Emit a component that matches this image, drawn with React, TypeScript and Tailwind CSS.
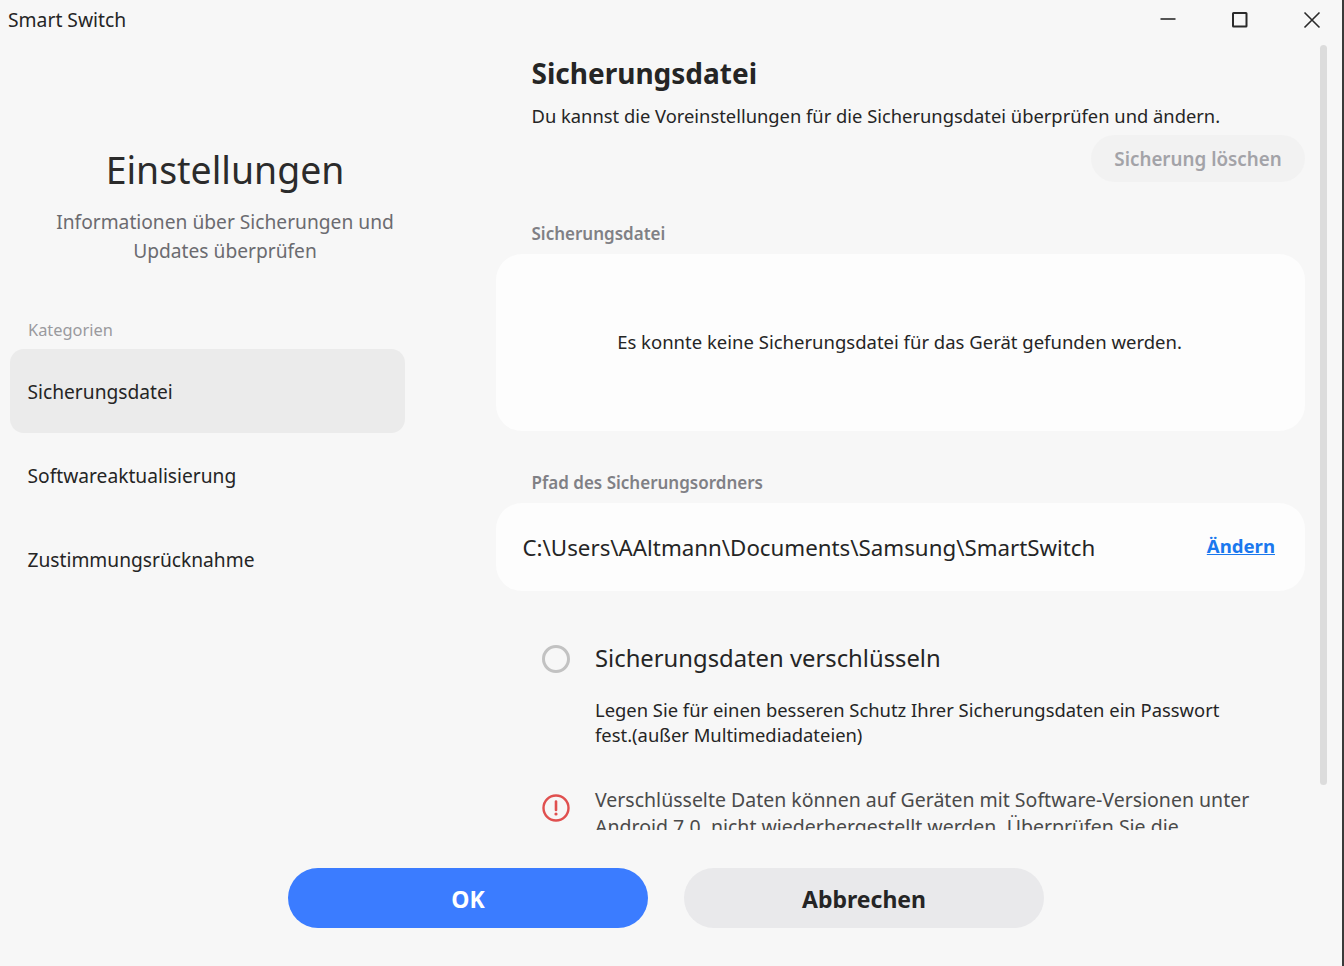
import React from 'react';

const categories = ['Sicherungsdatei', 'Softwareaktualisierung', 'Zustimmungsrücknahme'];

const App: React.FC = () => {
  return (
    <div className="flex h-[966px] w-[1344px] flex-col overflow-hidden border-r-2 border-[#3a3a3a] bg-[#f7f7f7] font-['Noto_Sans',sans-serif] text-[#252525]">
      {/* Title bar */}
      <div className="flex h-[40px] shrink-0 items-center justify-between">
        <span className="pl-2 text-[19.3px] leading-none">Smart Switch</span>
        <div className="flex items-center gap-[48px] pr-[18px]">
          <svg className="h-6 w-6" viewBox="0 0 24 24" fill="none" stroke="#2a2a2a" strokeWidth="1.6">
            <path d="M4.5 11h15" />
          </svg>
          <svg className="h-6 w-6" viewBox="0 0 24 24" fill="none" stroke="#2a2a2a" strokeWidth="2">
            <rect x="5" y="5" width="13.5" height="13.5" rx="0.5" />
          </svg>
          <svg className="h-6 w-6" viewBox="0 0 24 24" fill="none" stroke="#2a2a2a" strokeWidth="1.6">
            <path d="M4.5 4.5l15 15M19.5 4.5l-15 15" />
          </svg>
        </div>
      </div>

      <div className="flex h-[790px] shrink-0">
        {/* Sidebar */}
        <aside className="flex w-[496px] shrink-0 flex-col pl-[10px]">
          <div className="w-[430px] pt-[104px] text-center">
            <h1 className="text-[37.4px] leading-[52px] text-[#2b2b2b]">Einstellungen</h1>
            <p className="mt-[11px] text-[19.2px] leading-[29px] text-[#6b6b70]">
              Informationen über Sicherungen und<br />Updates überprüfen
            </p>
          </div>
          <p className="mt-[53px] pl-[18px] text-[16.4px] leading-[24px] text-[#9a9a9e]">Kategorien</p>
          <nav className="mt-[7px] flex w-[395px] flex-col">
            {categories.map((c, i) => (
              <div
                key={c}
                className={`flex h-[84px] items-center rounded-[14px] pl-[17.5px] pt-[2px] text-[19.2px] ${i === 0 ? 'bg-[#ebebeb]' : ''}`}
              >
                {c}
              </div>
            ))}
          </nav>
        </aside>

        {/* Main */}
        <main className="flex h-[790px] w-[809px] shrink-0 flex-col overflow-hidden">
          <div className="pl-[35.5px] pt-[13px]">
            <h2 className="text-[28px] font-bold leading-[40px] text-[#252525]">Sicherungsdatei</h2>
            <p className="mt-[10px] text-[18.35px] leading-[26px]">
              Du kannst die Voreinstellungen für die Sicherungsdatei überprüfen und ändern.
            </p>
          </div>
          <div className="mt-[6px] flex justify-end">
            <button className="flex h-[47px] w-[214px] items-center justify-center rounded-full bg-[#f2f2f2] pt-[2px] text-[18.8px] font-semibold text-[#a3a3a8]">
              Sicherung löschen
            </button>
          </div>

          <p className="mt-[40px] pl-[35.5px] text-[17px] font-semibold leading-[24px] text-[#808085]">Sicherungsdatei</p>
          <div className="mt-[8px] flex h-[177px] shrink-0 items-center justify-center rounded-[26px] bg-[#fdfdfd] pb-[2px] pr-[2px] text-[18.5px]">
            Es konnte keine Sicherungsdatei für das Gerät gefunden werden.
          </div>

          <p className="mt-[40px] pl-[35.5px] text-[17px] font-semibold leading-[24px] text-[#808085]">Pfad des Sicherungsordners</p>
          <div className="mt-[8px] flex h-[88px] shrink-0 items-center justify-between rounded-[26px] bg-[#fdfdfd] pl-[26.5px] pr-[30px] pt-[2px]">
            <span className="text-[22.3px]">C:\Users\AAltmann\Documents\Samsung\SmartSwitch</span>
            <a className="mb-[4px] text-[18.6px] font-bold text-[#1a78ee] underline">Ändern</a>
          </div>

          <div className="mt-[52px] flex gap-[25px] pl-[46px]">
            <div className="mt-[2px] h-[28px] w-[28px] shrink-0 rounded-full border-[3px] border-[#c2c2c2]" />
            <div className="flex flex-col">
              <p className="text-[23.8px] leading-[30px]">Sicherungsdaten verschlüsseln</p>
              <p className="mt-[24px] w-[650px] text-[18.4px] leading-[25px]">
                Legen Sie für einen besseren Schutz Ihrer Sicherungsdaten ein Passwort fest.(außer Multimediadateien)
              </p>
            </div>
          </div>

          <div className="mt-[39px] flex gap-[25px] pl-[46px]">
            <svg className="mt-[8px] h-[28px] w-[28px] shrink-0" viewBox="0 0 28 28" fill="none">
              <circle cx="14" cy="14" r="12.5" stroke="#e0504f" strokeWidth="2.4" />
              <path d="M14 7.5v8.5" stroke="#e0504f" strokeWidth="2.6" strokeLinecap="round" />
              <circle cx="14" cy="20" r="1.6" fill="#e0504f" />
            </svg>
            <p className="w-[680px] text-[19.5px] leading-[27px] text-[#4a4a4a]">
              Verschlüsselte Daten können auf Geräten mit Software-Versionen unter Android 7.0. nicht wiederhergestellt werden. Überprüfen Sie die
            </p>
          </div>
        </main>

        {/* Scrollbar */}
        <div className="ml-[15px] mt-[5px] h-[740px] w-[7px] shrink-0 rounded-full bg-[#dcdcdc]" />
      </div>

      {/* Footer */}
      <div className="flex flex-1 items-start gap-[36px] pl-[288px] pt-[38px]">
        <button className="flex h-[60px] w-[360px] items-center justify-center rounded-full bg-[#3b7cff] pt-[2px] text-[23px] font-bold text-white">
          OK
        </button>
        <button className="flex h-[60px] w-[360px] items-center justify-center rounded-full bg-[#e9e9eb] pt-[2px] text-[23px] font-bold text-[#252525]">
          Abbrechen
        </button>
      </div>
    </div>
  );
};

export default App;
